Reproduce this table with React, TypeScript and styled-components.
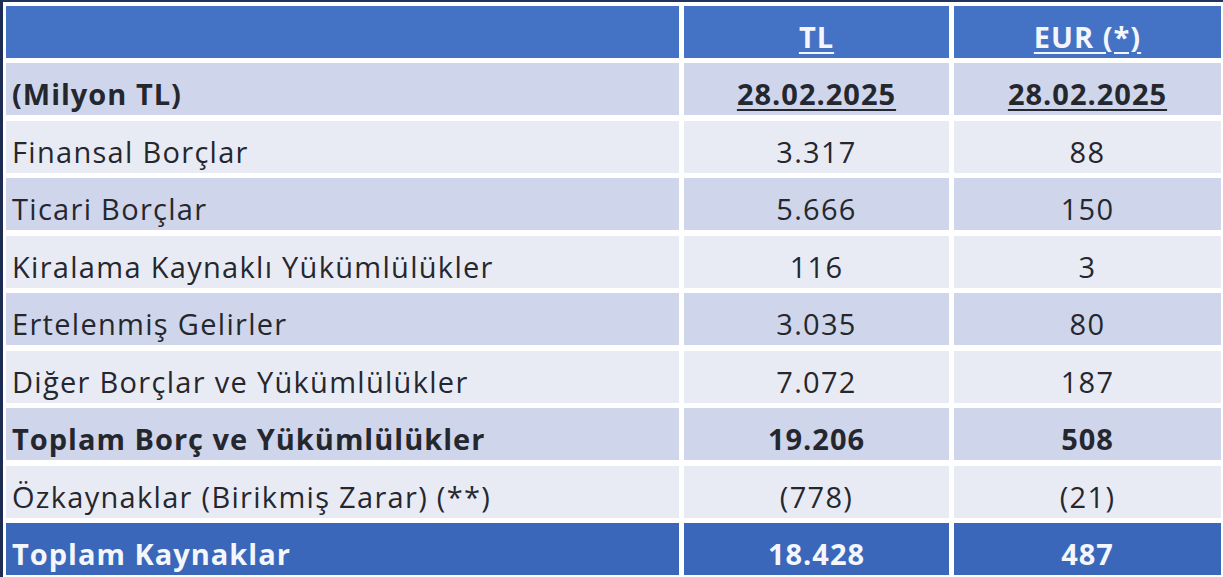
import React from 'react';
import styled, { createGlobalStyle } from 'styled-components';

const GlobalStyle = createGlobalStyle`
  html, body {
    margin: 0;
    padding: 0;
    background: #ffffff;
    overflow: hidden;
  }
`;

type Tone = 'head' | 'dark' | 'light' | 'total';

const toneBg: Record<Tone, string> = {
  head: '#4472c4',
  dark: '#cfd5ea',
  light: '#e9ebf4',
  total: '#3a67ba',
};

const Frame = styled.div`
  width: 1223px;
  height: 577px;
  box-sizing: border-box;
  border-left: 3px solid #1d2c52;
  border-top: 2px solid #22345e;
  padding: 4px 2px 2px 3px;
  background: #ffffff;
`;

const Table = styled.div`
  height: 100%;
  display: grid;
  grid-template-columns: 673px 265px 1fr;
  grid-template-rows: repeat(10, 1fr);
  column-gap: 5px;
  row-gap: 5.5px;
  font-family: 'Open Sans', 'Liberation Sans', sans-serif;
`;

const Cell = styled.div<{ $tone: Tone; $align?: 'left' | 'center'; $bold?: boolean }>`
  background: ${({ $tone }) => toneBg[$tone]};
  color: ${({ $tone }) => ($tone === 'head' || $tone === 'total' ? '#f4f6fb' : '#25272f')};
  font-size: 29px;
  font-weight: ${({ $bold }) => ($bold ? 700 : 400)};
  display: flex;
  align-items: center;
  justify-content: ${({ $align }) => ($align === 'left' ? 'flex-start' : 'center')};
  padding: 9px 0 0 ${({ $align }) => ($align === 'left' ? '6px' : '0')};
  letter-spacing: ${({ $bold }) => ($bold ? '1px' : '1.3px')};
  white-space: nowrap;
  overflow: hidden;
`;

const Under = styled.span`
  text-decoration: underline;
  text-decoration-thickness: 2px;
  text-underline-offset: 4px;
`;

type Row = { label: string; tl: string; eur: string; tone: Tone; bold?: boolean };

const rows: Row[] = [
  { label: 'Finansal Borçlar', tl: '3.317', eur: '88', tone: 'light' },
  { label: 'Ticari Borçlar', tl: '5.666', eur: '150', tone: 'dark' },
  { label: 'Kiralama Kaynaklı Yükümlülükler', tl: '116', eur: '3', tone: 'light' },
  { label: 'Ertelenmiş Gelirler', tl: '3.035', eur: '80', tone: 'dark' },
  { label: 'Diğer Borçlar ve Yükümlülükler', tl: '7.072', eur: '187', tone: 'light' },
  { label: 'Toplam Borç ve Yükümlülükler', tl: '19.206', eur: '508', tone: 'dark', bold: true },
  { label: 'Özkaynaklar (Birikmiş Zarar) (**)', tl: '(778)', eur: '(21)', tone: 'light' },
  { label: 'Toplam Kaynaklar', tl: '18.428', eur: '487', tone: 'total', bold: true },
];

export default function App() {
  return (
    <>
      <GlobalStyle />
      <Frame>
        <Table>
          <Cell $tone="head" />
          <Cell $tone="head" $bold>
            <Under>TL</Under>
          </Cell>
          <Cell $tone="head" $bold>
            <Under>EUR (*)</Under>
          </Cell>

          <Cell $tone="dark" $align="left" $bold>(Milyon TL)</Cell>
          <Cell $tone="dark" $bold>
            <Under>28.02.2025</Under>
          </Cell>
          <Cell $tone="dark" $bold>
            <Under>28.02.2025</Under>
          </Cell>

          {rows.map(r => (
            <React.Fragment key={r.label}>
              <Cell $tone={r.tone} $align="left" $bold={r.bold}>{r.label}</Cell>
              <Cell $tone={r.tone} $bold={r.bold}>{r.tl}</Cell>
              <Cell $tone={r.tone} $bold={r.bold}>{r.eur}</Cell>
            </React.Fragment>
          ))}
        </Table>
      </Frame>
    </>
  );
}
